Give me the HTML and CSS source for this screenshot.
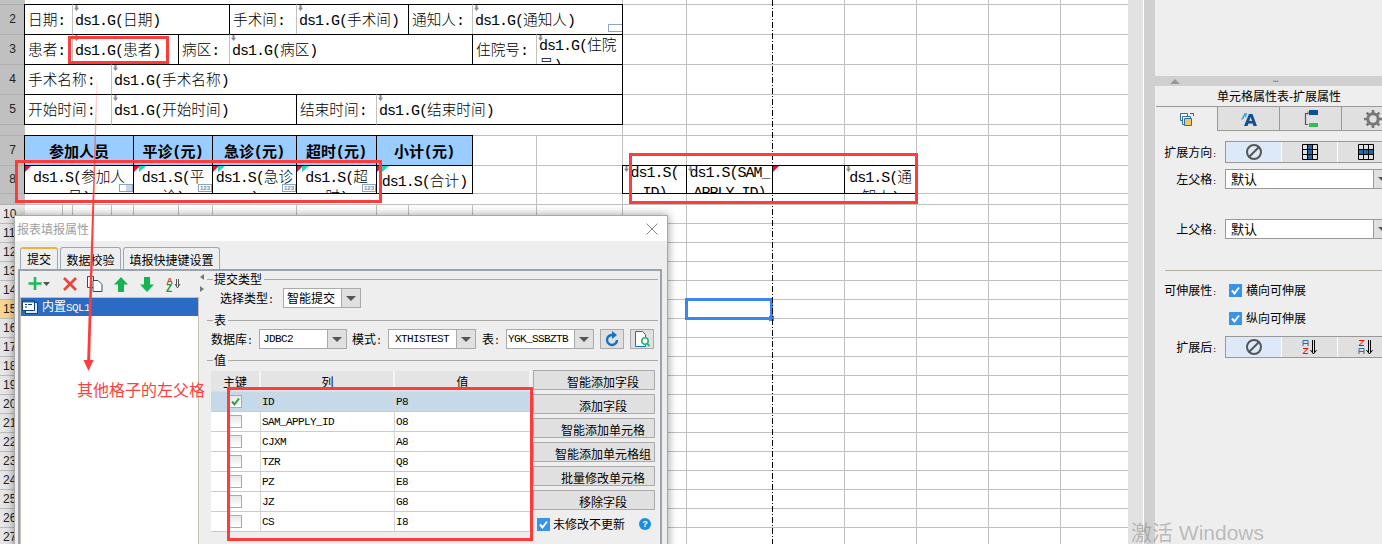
FILE: index.html
```html
<!DOCTYPE html>
<html lang="zh-CN">
<head>
<meta charset="utf-8">
<title>报表填报属性</title>
<link rel="stylesheet" href="styles.css">
</head>
<body>
<div class="app">
  <section class="sheet">
    <div class="rows">
      <div class="rh dark h5"></div>
      <div class="rh dark h30">2</div>
      <div class="rh dark h30">3</div>
      <div class="rh dark h30">4</div>
      <div class="rh dark h30">5</div>
      <div class="rh dark h11"></div>
      <div class="rh dark h30">7</div>
      <div class="rh dark h28">8</div>
      <div class="rh dark h11"></div>
      <div class="rh">10</div><div class="rh">11</div><div class="rh">12</div><div class="rh">13</div>
      <div class="rh">14</div><div class="rh sel">15</div><div class="rh">16</div><div class="rh">17</div>
      <div class="rh">18</div><div class="rh">19</div><div class="rh">20</div><div class="rh">21</div>
      <div class="rh">22</div><div class="rh">23</div><div class="rh">24</div><div class="rh">25</div>
      <div class="rh">26</div><div class="rh">27</div>
    </div>
    <div class="canvas">
      <div class="lines-low"></div>
      <div class="patch-top"></div>
      <div class="patch-mid"></div>

      <div class="cell a21"><span class="pad">日期<i class="m">:</i></span></div>
      <div class="cell val a22 ex"><span class="pv"><i class="m">ds1.G(</i>日期<i class="m">)</i></span></div>
      <div class="cell a23"><span class="pad">手术间<i class="m">:</i></span></div>
      <div class="cell val a24 ex"><span class="pv"><i class="m">ds1.G(</i>手术间<i class="m">)</i></span></div>
      <div class="cell a25"><span class="pad">通知人<i class="m">:</i></span></div>
      <div class="cell val a26 ex"><span class="pv"><i class="m">ds1.G(</i>通知人<i class="m">)</i></span><b class="stub"></b></div>

      <div class="cell a31"><span class="pad">患者<i class="m">:</i></span></div>
      <div class="cell val a32 ex"><span class="pv"><i class="m">ds1.G(</i>患者<i class="m">)</i></span></div>
      <div class="cell a33"><span class="pad">病区<i class="m">:</i></span></div>
      <div class="cell val a34 ex"><span class="pv"><i class="m">ds1.G(</i>病区<i class="m">)</i></span></div>
      <div class="cell a35"><span class="pad">住院号<i class="m">:</i></span></div>
      <div class="cell val a36 ex wrap"><span class="pv"><i class="m">ds1.G(</i>住院号<i class="m">)</i></span></div>

      <div class="cell a41"><span class="pad">手术名称<i class="m">:</i></span></div>
      <div class="cell val a42 ex"><span class="pv"><i class="m">ds1.G(</i>手术名称<i class="m">)</i></span></div>

      <div class="cell a51"><span class="pad">开始时间<i class="m">:</i></span></div>
      <div class="cell val a52 ex"><span class="pv"><i class="m">ds1.G(</i>开始时间<i class="m">)</i></span></div>
      <div class="cell a53"><span class="pad">结束时间<i class="m">:</i></span></div>
      <div class="cell val a54 ex"><span class="pv"><i class="m">ds1.G(</i>结束时间<i class="m">)</i></span></div>

      <div class="cell head a71">参加人员</div>
      <div class="cell head a72">平诊<i class="mb">(</i>元<i class="mb">)</i></div>
      <div class="cell head a73">急诊<i class="mb">(</i>元<i class="mb">)</i></div>
      <div class="cell head a74">超时<i class="mb">(</i>元<i class="mb">)</i></div>
      <div class="cell head a75">小计<i class="mb">(</i>元<i class="mb">)</i></div>

      <div class="cell ds a71r"><b class="tri-red"></b><span><i class="m">ds1.S(</i>参加人员<i class="m">)</i></span><b class="dd"></b></div>
      <div class="cell ds a72r"><b class="tri-red"></b><b class="tri-teal"></b><span><i class="m">ds1.S(</i>平诊<i class="m">)</i></span><b class="n123">123</b></div>
      <div class="cell ds a73r"><b class="tri-red"></b><b class="tri-teal"></b><span><i class="m">ds1.S(</i>急诊<i class="m">)</i></span><b class="n123">123</b></div>
      <div class="cell ds a74r"><b class="tri-red"></b><b class="tri-teal"></b><span><i class="m">ds1.S(</i>超时<i class="m">)</i></span><b class="n123">123</b></div>
      <div class="cell ds a75r"><b class="tri-red"></b><b class="tri-teal"></b><span><i class="m">ds1.S(</i>合计<i class="m">)</i></span></div>

      <div class="cell ds a81 ex"><span><i class="m">ds1.S(</i><i class="m">ID)</i></span></div>
      <div class="cell ds a82 ex"><span><i class="m">ds1.S(SAM_</i><i class="m">APPLY_ID)</i></span></div>
      <div class="cell a83"><b class="tri-red"></b></div>
      <div class="cell ds a84 ex"><span><i class="m">ds1.S(</i>通知人<i class="m">)</i></span></div>

      <div class="cursor a15"><b class="handle"></b></div>
    </div>
    <div class="page-break"></div>
  </section>

  <div class="gutter"><div class="gutter-a"></div><div class="gutter-b"></div></div>

  <aside class="panel">
    <div class="panel-top"></div>
    <div class="split">
      <b class="split-up"></b>
      <span class="split-dots">•••</span>
    </div>
    <div class="panel-title">单元格属性表<i class="dash">-</i>扩展属性</div>
    <div class="ptabs">
      <div class="ptab on">
        <svg width="16" height="16" viewBox="0 0 16 16"><path d="M1.500 2.500h7v7h-7z" fill="#fff" stroke="#2a6ea8"/><path d="M3.500 5.500h8v8h-8z" fill="#fff" stroke="#2a6ea8"/><path d="M5.500 7.500h7v7h-7z" fill="#f7c35c" stroke="#2a6ea8"/><path d="M11 2.500h3.500V5M14.500 2.500l-1 0" fill="none" stroke="#555"/></svg>
      </div>
      <div class="ptab">
        <svg width="16" height="14" viewBox="0 0 16 14"><path d="M3.500 1 0 7.500h2L4 4l1 2 1-5z" fill="#35b0e6"/><path d="M8 2h3.500L16 14h-3.600l-.7-2.500H7.500L6.500 14H3zM8.300 9h2.700L9.600 5z" fill="#0f4f96" fill-rule="evenodd"/></svg>
      </div>
      <div class="ptab">
        <svg width="14" height="18" viewBox="0 0 14 18"><path d="M5 0h9v5H5z" fill="#0f4f96"/><path d="M5 13h9v4H5z" fill="#2fbf55"/><path d="M4 3.500H1.500v11H4" fill="none" stroke="#555" stroke-width="1.200"/><path d="M4 1.500v3" stroke="#555"/></svg>
      </div>
      <div class="ptab">
        <svg width="18" height="18" viewBox="0 0 18 18"><circle cx="9" cy="9" r="5.200" fill="none" stroke="#777" stroke-width="3"/><path d="M9 0v3.500M9 14.500V18M0 9h3.500M14.500 9H18M2.600 2.600l2.500 2.500M12.900 12.900l2.500 2.500M15.400 2.600l-2.500 2.500M5.100 12.900l-2.500 2.500" stroke="#777" stroke-width="2.600"/></svg>
      </div>
    </div>

    <div class="pform">
      <div class="frow mt11">
        <label class="plabel">扩展方向<i class="c">:</i></label>
        <div class="seg">
          <div class="sg on"><svg class="no" width="16" height="16" viewBox="0 0 16 16"><circle cx="8" cy="8" r="7" fill="none" stroke="#555" stroke-width="2"/><path d="M3 13 13 3" stroke="#555" stroke-width="2"/></svg></div>
          <div class="sg"><svg width="16" height="16" viewBox="0 0 16 16"><path d="M5.500.5h5v15h-5z" fill="#1f6aa5"/><path d="M.5.500h15v15H.5zM5.500.5v15M10.500.5v15M.5 5.500h15M.5 10.500h15" fill="none" stroke="#000"/></svg></div>
          <div class="sg"><svg width="16" height="16" viewBox="0 0 16 16"><path d="M.5 5.500h15v5H.5z" fill="#1f6aa5"/><path d="M.5.500h15v15H.5zM5.500.5v15M10.500.5v15M.5 5.500h15M.5 10.500h15" fill="none" stroke="#000"/></svg></div>
        </div>
      </div>
      <div class="frow mt6">
        <label class="plabel">左父格<i class="c">:</i></label>
        <div class="pcombo"><span>默认</span><b class="pbtn"></b></div>
      </div>
      <div class="frow mt30">
        <label class="plabel">上父格<i class="c">:</i></label>
        <div class="pcombo"><span>默认</span><b class="pbtn"></b></div>
      </div>
      <hr class="prule">
      <div class="frow chkrow mt12">
        <label class="plabel">可伸展性<i class="c">:</i></label>
        <b class="chk"><svg width="13" height="13" viewBox="0 0 13 13"><path d="M3 6.500 5.500 9.500 10 3.500" fill="none" stroke="#fff" stroke-width="2"/></svg></b>
        <span class="chktext">横向可伸展</span>
      </div>
      <div class="frow chkrow mt16">
        <label class="plabel"></label>
        <b class="chk"><svg width="13" height="13" viewBox="0 0 13 13"><path d="M3 6.500 5.500 9.500 10 3.500" fill="none" stroke="#fff" stroke-width="2"/></svg></b>
        <span class="chktext">纵向可伸展</span>
      </div>
      <div class="frow mt9">
        <label class="plabel">扩展后<i class="c">:</i></label>
        <div class="seg">
          <div class="sg on"><svg class="no" width="16" height="16" viewBox="0 0 16 16"><circle cx="8" cy="8" r="7" fill="none" stroke="#555" stroke-width="2"/><path d="M3 13 13 3" stroke="#555" stroke-width="2"/></svg></div>
          <div class="sg"><svg width="16" height="16" viewBox="0 0 16 16"><path d="M1 7V1.500h5V7M1 4.500h5" fill="none" stroke="#2a6ea8"/><path d="M1 9.500h5L1 14.500h5" fill="none" stroke="#f00"/><path d="M10.500 1v13M12.500 1v13M8.500 11l3 4 3-4" fill="none" stroke="#000"/></svg></div>
          <div class="sg"><svg width="16" height="16" viewBox="0 0 16 16"><path d="M1 1.500h5L1 6.500h5" fill="none" stroke="#f00"/><path d="M1 15V9.500h5V15M1 12.500h5" fill="none" stroke="#2a6ea8"/><path d="M10.500 1v13M12.500 1v13M8.500 11l3 4 3-4" fill="none" stroke="#000"/></svg></div>
        </div>
      </div>
    </div>
  </aside>
</div>

<div class="dialog">
  <header class="dlg-title">
    <span>报表填报属性</span>
    <svg width="12" height="12" viewBox="0 0 12 12"><path d="M.5.500l11 11M11.500.5l-11 11" stroke="#888" fill="none"/></svg>
  </header>
  <div class="dlg-body">
    <nav class="tabs">
      <div class="tab on">提交</div>
      <div class="tab t2">数据校验</div>
      <div class="tab t3">填报快捷键设置</div>
    </nav>
    <div class="tab-panel">
      <div class="left">
        <div class="tools">
          <svg class="tool" width="22" height="16" viewBox="0 0 22 16"><path d="M7 1v13M0.500 7.500h13" stroke="#1fb85a" stroke-width="2.600" fill="none"/><path d="M15 6h7l-3.500 4z" fill="#555"/></svg>
          <svg class="tool" width="14" height="14" viewBox="0 0 14 14"><path d="M1 1l12 12M13 1 1 13" stroke="#e8453c" stroke-width="2.800"/></svg>
          <svg class="tool" width="16" height="16" viewBox="0 0 16 16"><path d="M.5.500h6v11h-6z" fill="#fff" stroke="#24506e"/><path d="M6 4.500h5l4 4v7H6z" fill="#fff" stroke="#24506e"/></svg>
          <svg class="tool" width="14" height="15" viewBox="0 0 14 15"><path d="M7 0l7 7.500H10V15H4V7.500H0z" fill="#17b455"/></svg>
          <svg class="tool" width="14" height="15" viewBox="0 0 14 15"><path d="M7 15l7-7.500H10V0H4v7.500H0z" fill="#17b455"/></svg>
          <svg class="tool" width="16" height="16" viewBox="0 0 16 16"><text x="1.500" y="7.500" class="az-a">A</text><text x="1" y="15.500" class="az-z">Z</text><path d="M11.500 3v7M13.500 3v7M10 8l2.500 4L15 8" fill="none" stroke="#555"/></svg>
        </div>
        <div class="tree">
          <div class="tree-row">
            <svg width="16" height="14" viewBox="0 0 16 14"><path d="M3.500 2.500h12v11h-12z" fill="#ddeaf8" stroke="#123f7a"/><path d="M.5.500h12v10H.5z" fill="#fff" stroke="#123f7a"/><path d="M.5.500h12v2H.5z" fill="#1f5fb0"/><path d="M3 4.500h2M3 7h2M6 4.500h4" stroke="#123f7a"/></svg>
            <span>内置<i class="dm">SQL1</i></span>
          </div>
        </div>
      </div>
      <div class="splitter"><b class="ar-l"></b><b class="ar-r"></b></div>
      <div class="right">
        <div class="legend first"><span>提交类型</span></div>
        <div class="drow mt2 in10">
          <span class="lab">选择类型<i class="c">:</i></span>
          <div class="combo w78"><span class="ctext">智能提交</span><b class="cbtn"></b></div>
        </div>
        <div class="legend mt4"><span>表</span></div>
        <div class="drow mt1">
          <span class="lab">数据库<i class="c">:</i></span>
          <div class="combo w88"><span class="ctext dm">JDBC2</span><b class="cbtn"></b></div>
          <span class="lab s2">模式<i class="c">:</i></span>
          <div class="combo w88"><span class="ctext dm ind">XTHISTEST</span><b class="cbtn"></b></div>
          <span class="lab s3">表<i class="c">:</i></span>
          <div class="combo w88"><span class="ctext dm tight">YGK_SSBZTB</span><b class="cbtn"></b></div>
          <div class="ibtn first-i"><svg width="14" height="16" viewBox="0 0 14 16"><path d="M12 9a5 5 0 1 1-3.500-4.800" fill="none" stroke="#1670c4" stroke-width="2.400"/><path d="M7 0l5 4-5 4z" fill="#1670c4"/></svg></div>
          <div class="ibtn"><svg width="18" height="16" viewBox="0 0 18 16"><path d="M2.500.5h7l3 3v12h-10z" fill="#fff" stroke="#1670c4"/><circle cx="12" cy="10" r="3.200" fill="#fff" stroke="#2bb673" stroke-width="1.600"/><path d="M14 12.500l2.500 2.500" stroke="#2bb673" stroke-width="1.800"/></svg></div>
        </div>
        <div class="legend mt3"><span>值</span></div>
        <div class="values">
          <div class="table">
            <div class="thead"><div class="tc c1">主键</div><div class="tc c2">列</div><div class="tc c3">值</div></div>
            <div class="tr on"><div class="tc c1"><b class="box"><svg width="13" height="13" viewBox="0 0 13 13"><path d="M3 6.500 5.500 9.500 10 3.500" fill="none" stroke="#2e9e3f" stroke-width="2"/></svg></b></div><div class="tc c2">ID</div><div class="tc c3">P8</div></div>
            <div class="tr"><div class="tc c1"><b class="box"></b></div><div class="tc c2">SAM_APPLY_ID</div><div class="tc c3">O8</div></div>
            <div class="tr"><div class="tc c1"><b class="box"></b></div><div class="tc c2">CJXM</div><div class="tc c3">A8</div></div>
            <div class="tr"><div class="tc c1"><b class="box"></b></div><div class="tc c2">TZR</div><div class="tc c3">Q8</div></div>
            <div class="tr"><div class="tc c1"><b class="box"></b></div><div class="tc c2">PZ</div><div class="tc c3">E8</div></div>
            <div class="tr"><div class="tc c1"><b class="box"></b></div><div class="tc c2">JZ</div><div class="tc c3">G8</div></div>
            <div class="tr"><div class="tc c1"><b class="box"></b></div><div class="tc c2">CS</div><div class="tc c3">I8</div></div>
          </div>
          <div class="actions">
            <div class="act">智能添加字段</div>
            <div class="act">添加字段</div>
            <div class="act">智能添加单元格</div>
            <div class="act">智能添加单元格组</div>
            <div class="act">批量修改单元格</div>
            <div class="act">移除字段</div>
            <div class="unmod">
              <b class="chk"><svg width="13" height="13" viewBox="0 0 13 13"><path d="M3 6.500 5.500 9.500 10 3.500" fill="none" stroke="#fff" stroke-width="2"/></svg></b>
              <span>未修改不更新</span>
              <b class="help">?</b>
            </div>
          </div>
        </div>
      </div>
    </div>
  </div>
</div>

<svg class="arrow" width="30" height="300" viewBox="0 0 30 300">
  <defs>
    <linearGradient id="fade" x1="0" y1="0" x2="0" y2="1">
      <stop offset="0" stop-color="#ff3b3b" stop-opacity=".12"/>
      <stop offset=".45" stop-color="#ff3b3b"/>
      <stop offset="1" stop-color="#ff3b3b"/>
    </linearGradient>
  </defs>
  <path d="M16.500 5 17.500 5 10 290 7 290z" fill="url(#fade)"/>
  <path d="M3.500 285H13.500L8.500 296z" fill="#ff3b3b"/>
</svg>
<div class="anno">其他格子的左父格</div>
<div class="mark m1"></div>
<div class="mark m2"></div>
<div class="mark m3"></div>
<div class="mark m4"></div>
<div class="watermark">激活 Windows</div>
</body>
</html>
```
FILE: styles.css
```css
* { box-sizing: border-box; }
html, body { margin: 0; padding: 0; width: 1382px; height: 544px; overflow: hidden; }
body { position: relative; font-family: "Noto Sans CJK SC", "Liberation Sans", sans-serif; font-size: 12px; color: #000; background: #eee; }
i { font-style: normal; }
b { font-weight: inherit; }

.app { display: flex; width: 1382px; height: 544px; overflow: hidden; }

/* sheet */
.sheet { position: relative; display: flex; width: 1128px; height: 544px; overflow: hidden; flex: none; background: #fff; }
.rows { width: 25px; flex: none; }
.rh { height: 19px; background: #e6e6e6; border-bottom: 1px solid #bbb; font: 12px/18px "Liberation Sans", sans-serif; color: #222; padding-left: 3px; }
.rh.sel { background: #fad590; }
.rh.dark { background: #c0c0c0; border-bottom-color: #b0b0b0; text-align: center; padding-left: 0; }
.h5 { height: 5px; }
.h11 { height: 11px; }
.h28 { height: 28px; line-height: 27px; }
.h30 { height: 30px; line-height: 29px; }

.canvas {
  flex: 1;
  display: grid;
  grid-template-columns: 38px 10px 39px 22px 45px 34px 17px 67px 80px 32px 64px 64px 86px 64px 86px 72px 72px 72px 72px 68px;
  grid-template-rows: 5px 30px 30px 30px 30px 11px 30px 28px 11px repeat(19, 19px);
  background-color: #fff;
  background-repeat: no-repeat;
  background-image:
    linear-gradient(#c0c0c0,#c0c0c0), linear-gradient(#c0c0c0,#c0c0c0), linear-gradient(#c0c0c0,#c0c0c0),
    linear-gradient(#c0c0c0,#c0c0c0), linear-gradient(#c0c0c0,#c0c0c0), linear-gradient(#c0c0c0,#c0c0c0),
    linear-gradient(#c0c0c0,#c0c0c0), linear-gradient(#c0c0c0,#c0c0c0), linear-gradient(#c0c0c0,#c0c0c0),
    linear-gradient(#c0c0c0,#c0c0c0), linear-gradient(#c0c0c0,#c0c0c0), linear-gradient(#c0c0c0,#c0c0c0),
    linear-gradient(#c0c0c0,#c0c0c0), linear-gradient(#c0c0c0,#c0c0c0), linear-gradient(#c0c0c0,#c0c0c0),
    linear-gradient(#c0c0c0,#c0c0c0), linear-gradient(#c0c0c0,#c0c0c0), linear-gradient(#c0c0c0,#c0c0c0),
    linear-gradient(#c0c0c0,#c0c0c0), linear-gradient(#c0c0c0,#c0c0c0), linear-gradient(#c0c0c0,#c0c0c0),
    linear-gradient(#c0c0c0,#c0c0c0), linear-gradient(#c0c0c0,#c0c0c0), linear-gradient(#c0c0c0,#c0c0c0),
    linear-gradient(#c0c0c0,#c0c0c0), linear-gradient(#c0c0c0,#c0c0c0);
  background-size:
    1px 100%, 1px 100%, 1px 100%, 1px 100%, 1px 100%, 1px 100%, 1px 100%, 1px 100%, 1px 100%,
    1px 100%, 1px 100%, 1px 100%, 1px 100%, 1px 100%, 1px 100%, 1px 100%, 1px 100%,
    100% 1px, 100% 1px, 100% 1px, 100% 1px, 100% 1px, 100% 1px, 100% 1px, 100% 1px, 100% 1px;
  background-position:
    37px 0, 47px 0, 86px 0, 108px 0, 153px 0, 187px 0, 271px 0, 351px 0, 383px 0,
    447px 0, 511px 0, 597px 0, 661px 0, 819px 0, 891px 0, 963px 0, 1035px 0,
    0 4px, 0 34px, 0 64px, 0 94px, 0 124px, 0 135px, 0 165px, 0 193px, 0 204px;
}
.lines-low { grid-area: 10 / 1 / 29 / -1; background: linear-gradient(transparent 18px, #c0c0c0 18px) 0 0 / 100% 19px; }
.patch-top { grid-area: 1 / 1 / 7 / 14; background: #fff; margin-right: 1px; margin-bottom: 1px; }
.patch-mid { grid-area: 9 / 1 / 10 / 12; background: #fff; margin-bottom: 1px; }

.cell {
  position: relative;
  margin: -1px 0 0 -1px;
  border: 1px solid #000;
  background: #fff;
  overflow: hidden;
  font-size: 14.67px;
  font-weight: 300;
  line-height: 18px;
  line-break: anywhere;
  display: flex;
  align-items: center;
}
.cell.val { border-left-color: #c0c0c0; }
.m { font-family: "Liberation Mono", monospace; font-size: 15px; font-weight: 400; letter-spacing: -1px; line-height: 1; }
.mb { font-family: "Liberation Sans", sans-serif; font-weight: 700; display: inline-block; width: 8px; text-align: center; line-height: 1; }
.pad { padding-left: 3px; white-space: nowrap; }
.pv { padding-left: 2px; }
.wrap .pv { align-self: flex-start; margin-top: -1px; word-break: break-all; line-height: 19px; }

.a21 { grid-area: 2 / 1 / 3 / 3; } .a22 { grid-area: 2 / 3 / 3 / 8; } .a23 { grid-area: 2 / 8 / 3 / 9; }
.a24 { grid-area: 2 / 9 / 3 / 11; } .a25 { grid-area: 2 / 11 / 3 / 12; } .a26 { grid-area: 2 / 12 / 3 / 14; }
.a31 { grid-area: 3 / 1 / 4 / 3; } .a32 { grid-area: 3 / 3 / 4 / 6; } .a33 { grid-area: 3 / 6 / 4 / 8; }
.a34 { grid-area: 3 / 8 / 4 / 12; } .a35 { grid-area: 3 / 12 / 4 / 13; } .a36 { grid-area: 3 / 13 / 4 / 14; }
.a41 { grid-area: 4 / 1 / 5 / 4; } .a42 { grid-area: 4 / 4 / 5 / 14; }
.a51 { grid-area: 5 / 1 / 6 / 4; } .a52 { grid-area: 5 / 4 / 6 / 9; } .a53 { grid-area: 5 / 9 / 6 / 10; } .a54 { grid-area: 5 / 10 / 6 / 14; }
.a71 { grid-area: 7 / 1 / 8 / 5; } .a72 { grid-area: 7 / 5 / 8 / 7; } .a73 { grid-area: 7 / 7 / 8 / 9; }
.a74 { grid-area: 7 / 9 / 8 / 10; } .a75 { grid-area: 7 / 10 / 8 / 12; }
.a71r { grid-area: 8 / 1 / 9 / 5; } .a72r { grid-area: 8 / 5 / 9 / 7; } .a73r { grid-area: 8 / 7 / 9 / 9; }
.a74r { grid-area: 8 / 9 / 9 / 10; } .a75r { grid-area: 8 / 10 / 9 / 12; }
.a81 { grid-area: 8 / 14 / 9 / 15; } .a82 { grid-area: 8 / 15 / 9 / 16; } .a83 { grid-area: 8 / 16 / 9 / 17; } .a84 { grid-area: 8 / 17 / 9 / 18; }
.a15 { grid-area: 15 / 15 / 16 / 16; }

.head { background: #99ccff; font-weight: 700; font-size: 15px; justify-content: center; }
.ds { align-items: flex-start; text-align: center; justify-content: center; padding: 0 1px; }
.ds > span { display: block; word-break: break-all; line-height: 19px; }
.a75r { align-items: center; }
.a81 span .m:first-child, .a82 span .m:first-child { display: block; }

.ex::before { content: ""; position: absolute; left: 1px; top: 0; width: 5px; height: 6px; background: #8a8a8a; clip-path: polygon(30% 0, 70% 0, 70% 45%, 100% 45%, 50% 100%, 0 45%, 30% 45%); }
.tri-red { position: absolute; left: 0; top: 0; width: 6px; height: 6px; background: #e8103c; clip-path: polygon(0 0, 100% 0, 0 100%); }
.tri-teal { position: absolute; left: 5px; top: 0; width: 7px; height: 6px; background: #14e0b8; clip-path: polygon(0 0, 100% 0, 0 100%); }
.n123 { position: absolute; right: 0; bottom: 1px; width: 14px; height: 8px; border: 1px solid #8ea3c8; font: 700 6px/6px "Liberation Sans", sans-serif; color: #7089b5; text-align: center; background: #fff; }
.dd { position: absolute; right: 0; bottom: 1px; width: 14px; height: 8px; border: 1px solid #8ea3c8; background: linear-gradient(90deg, #fff 50%, #c8d4ea 50%); }
.stub { position: absolute; right: 0; bottom: 2px; width: 14px; height: 8px; border: 1px solid #8ea3c8; border-right: 0; background: #fff; }

.cursor { position: relative; margin: -2px 0 -1px -2px; border: 3px solid #3a86f0; z-index: 3; }
.handle { position: absolute; right: -4px; bottom: -4px; width: 5px; height: 5px; background: #3a86f0; }
.page-break { position: absolute; left: 772px; top: 0; width: 1px; height: 544px; background: repeating-linear-gradient(#000 0 6px, transparent 6px 8px, #000 8px 9px, transparent 9px 11px); z-index: 4; }

/* gutter */
.gutter { display: flex; width: 27px; flex: none; }
.gutter-a { width: 16px; background: #e2e2e2; border-right: 1px solid #fff; }
.gutter-b { width: 11px; background: #d0d0d0; }

/* property panel */
.panel { flex: 1; background: #eee; display: flex; flex-direction: column; overflow: hidden; }
.panel-top { height: 76px; flex: none; }
.split { height: 10px; background: #d0d0d0; display: flex; align-items: center; position: relative; padding-left: 15px; flex: none; }
.split-up { width: 0; height: 0; border: 5px solid transparent; border-top: 0; border-bottom: 5px solid #999; }
.split-dots { font: 5px/10px "Liberation Sans", sans-serif; color: #777; margin-left: 93px; }
.panel-title { height: 20px; text-align: center; line-height: 19px; font-size: 12px; padding-left: 21px; white-space: nowrap; flex: none; }
.dash { font-family: "Liberation Sans", sans-serif; }
.ptabs { display: flex; height: 25px; border-top: 1px solid #999; margin-left: 1px; flex: none; width: 240px; }
.ptab { width: 62px; flex: none; background: #e0e0e0; border-right: 1px solid #999; border-bottom: 1px solid #999; display: flex; align-items: center; justify-content: center; }
.ptab.on { background: #eee; border-bottom: 0; }
.pform { display: flex; flex-direction: column; }
.frow { display: flex; align-items: center; white-space: nowrap; }
.plabel { width: 62px; text-align: right; flex: none; line-height: 18px; margin-right: 8px; }
.plabel .c { font-size: 8px; }
.c { font-family: "Liberation Mono", monospace; font-size: 10px; line-height: 1; }
.mt11 { margin-top: 10px; } .mt6 { margin-top: 6px; } .mt30 { margin-top: 30px; }
.mt12 { margin-top: 12px; } .mt16 { margin-top: 14px; } .mt9 { margin-top: 11px; }
.seg { display: flex; height: 22px; width: 170px; border: 1px solid #999; flex: none; background: #fff; gap: 1px; }
.sg { width: 55px; flex: none; background: #e0e0e0; display: flex; align-items: center; justify-content: center; }
.sg.on { background: #dce9f9; }
.pcombo { width: 170px; height: 20px; border: 1px solid #999; background: #fff; display: flex; flex: none; position: relative; font-size: 13px; line-height: 18px; padding-left: 5px; }
.pbtn { position: absolute; left: 147px; top: 0; bottom: 0; width: 24px; background: #e0e0e0; border-left: 1px solid #999; }
.pbtn::after { content: ""; position: absolute; left: 4px; top: 7px; border: 4px solid transparent; border-top: 4px solid #555; }
.prule { margin: 31px 0 0 10px; border: 0; border-top: 1px solid #b5b0a0; height: 1px; width: 240px; }
.chkrow { height: 14px; }
.chk { display: inline-flex; width: 13px; height: 13px; background: #3a93ea; flex: none; margin-left: 4px; }
.chktext { margin-left: 4px; line-height: 14px; }

/* dialog */
.dialog { position: absolute; left: 14px; top: 215px; width: 654px; height: 340px; background: #eee; box-shadow: 0 0 9px rgba(0,0,0,.4); border: 1px solid #a8a8a8; border-bottom: 0; display: flex; flex-direction: column; }
.dlg-title { height: 25px; background: #fff; display: flex; justify-content: space-between; align-items: center; padding: 0 9px 0 2px; color: #a0a0a0; font-size: 12px; flex: none; }
.dlg-body { flex: 1; padding: 6px 5px 0 3px; display: flex; flex-direction: column; min-height: 0; }
.tabs { display: flex; height: 22px; padding-left: 2px; gap: 2px; flex: none; }
.tab { width: 38px; height: 22px; border: 1px solid #9aa8b8; border-bottom: 0; border-radius: 3px 3px 0 0; text-align: center; line-height: 23px; background: #eee; }
.tab.on { border-top: 2px solid #f0b040; line-height: 19px; }
.tab.t2 { width: 61px; }
.tab.t3 { width: 97px; }
.tab-panel { flex: 1; border: 2px solid #9aa3ad; border-bottom: 0; display: flex; min-height: 0; background: #eee; }
.left { width: 179px; flex: none; display: flex; flex-direction: column; }
.tools { height: 26px; display: flex; align-items: center; padding-left: 8px; flex: none; }
.tool { flex: none; margin-right: 11px; }
.tool:nth-child(1) { margin-right: 13px; }
.tool:nth-child(2) { margin-right: 10px; }
.tool:nth-child(4) { margin-right: 12px; }
.az-a { font: 700 9px "Liberation Sans", sans-serif; fill: #d33; }
.az-z { font: 700 10px "Liberation Sans", sans-serif; fill: #1a9a3a; }
.tree { flex: 1; background: #fff; border: 1px solid #c4c0b0; }
.tree-row { height: 18px; background: #2c6bc4; color: #fff; display: flex; align-items: center; padding-left: 1px; gap: 4px; line-height: 18px; }
.dm { font-family: "Liberation Mono", monospace; font-size: 11px; letter-spacing: -.6px; }
.splitter { width: 7px; flex: none; position: relative; }
.ar-l { position: absolute; left: 1px; top: 3px; border: 3px solid transparent; border-left: 0; border-right: 4px solid #777; }
.ar-r { position: absolute; left: 1px; top: 15px; border: 3px solid transparent; border-right: 0; border-left: 4px solid #777; }
.right { flex: 1; padding-left: 5px; min-width: 0; line-height: 16px; white-space: nowrap; }
.legend { height: 16px; margin-left: -4px; display: flex; align-items: center; }
.legend::before { content: ""; width: 6px; height: 1px; background: #a8a8a8; margin-right: 1px; }
.legend::after { content: ""; flex: 1; height: 1px; background: #a8a8a8; margin: 0 2px 0 2px; }
.legend.mt4 { margin-top: 4px; } .legend.mt3 { margin-top: 3px; }
.drow { display: flex; align-items: center; height: 20px; }
.mt2 { margin-top: 1px; } .mt1 { margin-top: 1px; }
.in10 { padding-left: 9px; }
.lab { margin-right: 6px; }
.s2 { margin-left: 5px; }
.s3 { margin-left: 6px; }
.combo { height: 20px; border: 1px solid #aaa; background: #fff; display: flex; flex: none; overflow: hidden; }
.w78 { width: 78px; margin-left: 3px; }
.w88 { width: 88px; }
.ctext { flex: 1; padding-left: 3px; line-height: 18px; min-width: 0; overflow: hidden; }
.ctext.ind { padding-left: 6px; }
.ctext.tight { padding-left: 1px; }
.cbtn { width: 19px; flex: none; background: #e0e0e0; border-left: 1px solid #aaa; position: relative; }
.cbtn::after { content: ""; position: absolute; left: 4px; top: 7px; border: 5px solid transparent; border-top: 5px solid #555; border-bottom: 0; }
.ibtn { width: 24px; height: 20px; border: 1px solid #aaa; background: #e0e0e0; display: flex; align-items: center; justify-content: center; margin-left: 6px; flex: none; }
.values { display: flex; margin-top: 3px; gap: 2px; }
.table { width: 320px; flex: none; }
.thead { display: flex; height: 21px; background: #e4e4e4; border-bottom: 1px solid #ddd; }
.tr { display: flex; height: 20px; background: #fff; border-bottom: 1px solid #ccc; font-family: "Liberation Mono", monospace; font-size: 11px; letter-spacing: -.6px; line-height: 20px; }
.tr.on { background: #c6d9e8; }
.tc { border-right: 1px solid #d8d8d8; padding-left: 1px; }
.thead .tc { text-align: center; line-height: 22px; border-right: 2px solid #f4f4f4; overflow: hidden; }
.c1 { width: 50px; flex: none; display: flex; justify-content: center; padding-left: 0; }
.c2 { width: 134px; flex: none; }
.c3 { width: 136px; flex: none; border-right: 0; }
.box { display: block; width: 13px; height: 13px; margin: 3px 0 0 0; border: 1px solid #aaa; background: linear-gradient(#e8e8e8, #fff); }
.box svg { display: block; margin: -1px; }
.actions { width: 122px; flex: none; margin-top: -1px; }
.act { height: 20px; margin-bottom: 4px; border: 1px solid #aaa; background: #e0e0e0; text-align: center; padding-left: 18px; line-height: 21px; white-space: nowrap; overflow: hidden; }
.unmod { display: flex; align-items: center; margin-top: 7px; height: 14px; line-height: 14px; }
.unmod span { margin-left: 3px; }
.help { width: 12px; height: 12px; border-radius: 50%; background: #1a8ce8; color: #fff; font: 700 9px/12px "Liberation Sans", sans-serif; text-align: center; margin-left: 14px; flex: none; }

/* annotations */
.arrow { position: absolute; left: 80px; top: 75px; z-index: 5; }
.anno { position: absolute; left: 77px; top: 378px; font-size: 16px; line-height: 22px; color: #ff4040; white-space: nowrap; z-index: 5; }
.mark { position: absolute; border: 3px solid #ff3b3b; z-index: 5; }
.m1 { left: 68px; top: 36px; width: 101px; height: 28px; }
.m2 { left: 15px; top: 160px; width: 367px; height: 43px; }
.m3 { left: 629px; top: 153px; width: 289px; height: 51px; }
.m4 { left: 227px; top: 387px; width: 306px; height: 154px; }
.watermark { position: absolute; left: 1131px; top: 519px; font: 21px/28px "Liberation Sans", "Noto Sans CJK SC", sans-serif; color: rgba(120,120,120,.45); white-space: nowrap; z-index: 6; }
```
